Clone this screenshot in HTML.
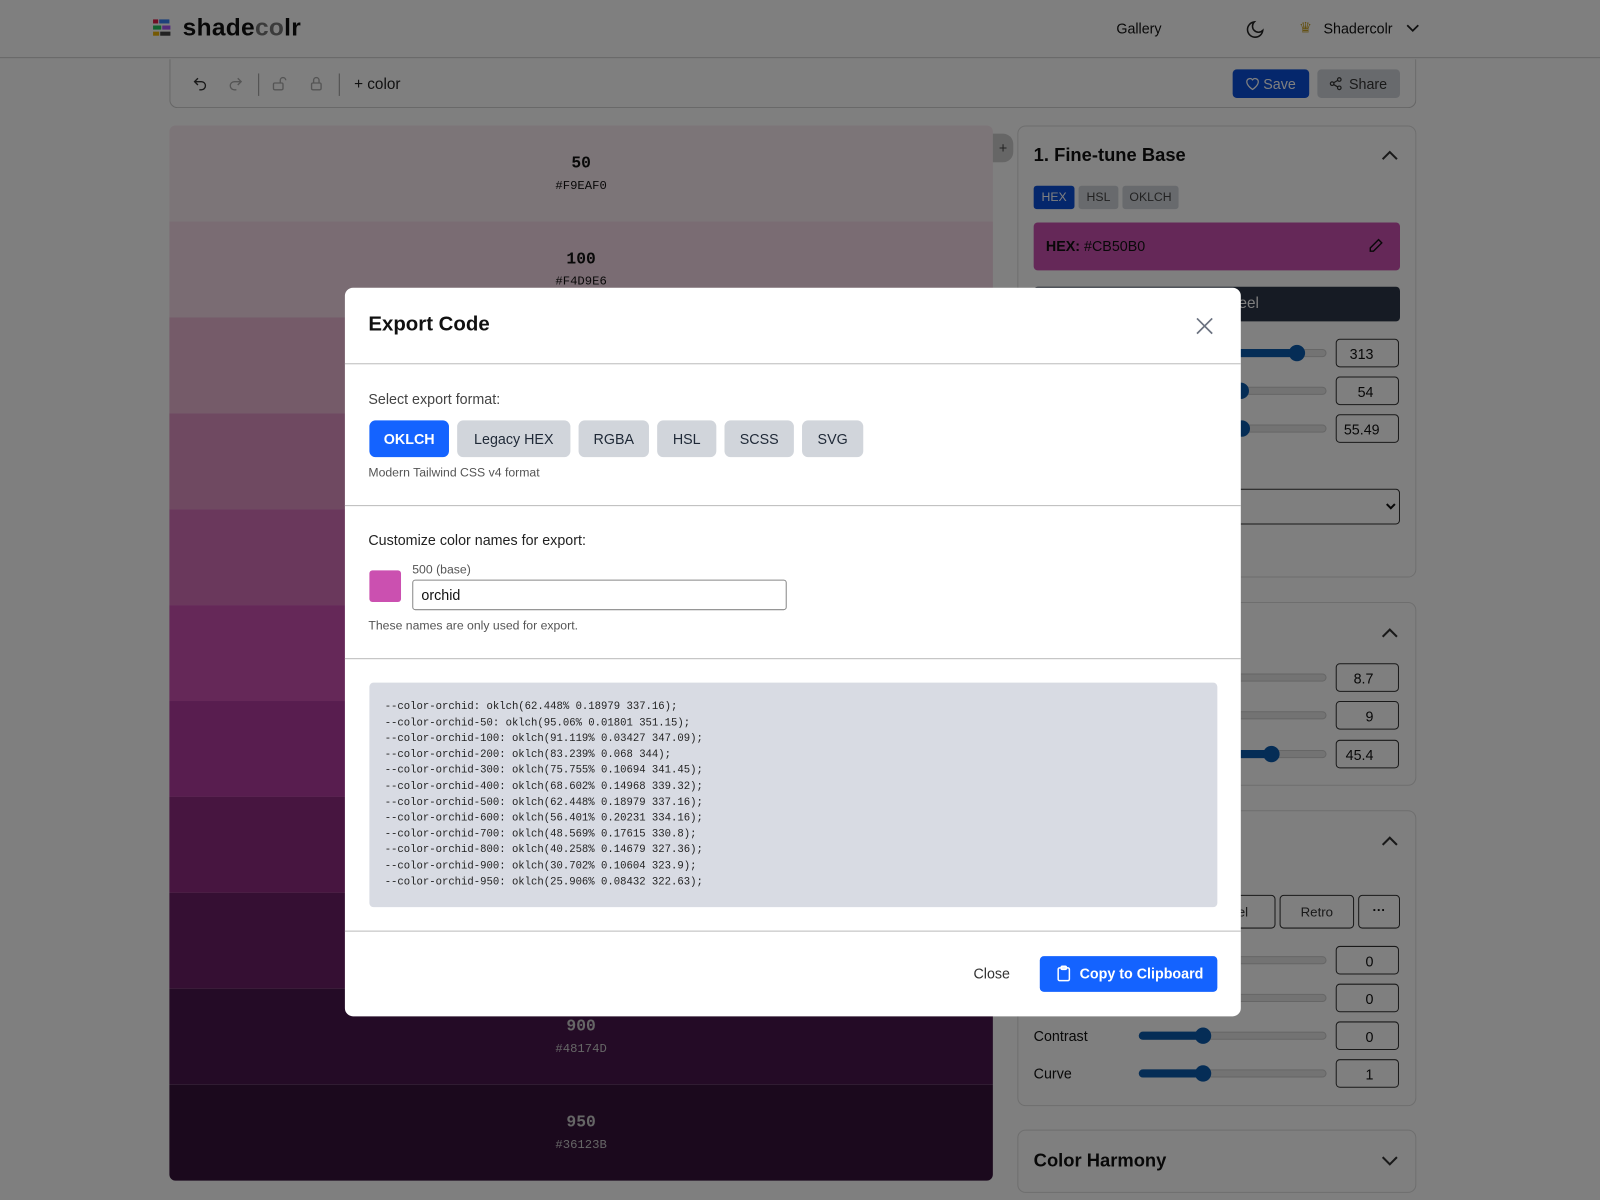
<!DOCTYPE html>
<html><head><meta charset="utf-8"><style>
*{box-sizing:border-box;margin:0;padding:0}
html,body{width:1600px;height:1200px;overflow:hidden;background:#fff;font-family:"Liberation Sans",sans-serif}
#w{position:absolute;left:0;top:0;width:1568px;height:1176px;transform:scale(1.020408);transform-origin:0 0;background:#fff}
.a{position:absolute}
.mono{font-family:"Liberation Mono",monospace}
.card{position:absolute;border:1px solid #ddd;border-radius:8px;background:#fff}
.sw{position:absolute;left:166px;width:807px;height:94px;text-align:center}
.sw b{display:block;margin-top:28px;font-family:"Liberation Mono",monospace;font-size:16px}
.sw span{display:block;margin-top:6px;font-family:"Liberation Mono",monospace;font-size:12px}
.num{position:absolute;width:62px;height:28px;border:1px solid #333;border-radius:4px;font-size:14px;text-align:right;padding:6px 24px 0 0;color:#111}
.num::after{content:"";position:absolute;right:5px;top:5px;width:8px;height:16px;background:
linear-gradient(#0000,#0000);border:none}
.track{position:absolute;height:8px;border-radius:4px;background:#e6e6e6;border:1px solid #ccc}
.fill{position:absolute;height:8px;border-radius:4px;background:#0a5aad}
.knob{position:absolute;width:16px;height:16px;border-radius:50%;background:#0a5aad}
.ov{position:absolute;left:0;top:0;width:1568px;height:1176px;background:rgba(0,0,0,.5)}
.fmt{position:absolute;top:412px;height:36px;border-radius:6px;background:#d1d5db;color:#1f2937;font-size:14px;text-align:center;line-height:36px}
.lbl{position:absolute;font-size:14px;color:#111}
.sp{position:absolute;right:4px;top:4px}
</style></head><body><div id="w">
<!-- header -->
<div class="a" style="left:0;top:0;width:1568px;height:57px;border-bottom:1px solid #ccc"></div>
<div class="a" style="left:150px;top:19px;width:17px;height:17px">
<div class="a" style="left:0;top:0;width:5px;height:4px;background:#e11d48"></div><div class="a" style="left:6px;top:0;width:10px;height:4px;background:#3b82f6"></div>
<div class="a" style="left:0;top:6px;width:8px;height:4px;background:#22c55e"></div><div class="a" style="left:9px;top:6px;width:8px;height:4px;background:#a855f7"></div>
<div class="a" style="left:0;top:12px;width:6px;height:4px;background:#eab308"></div><div class="a" style="left:7px;top:12px;width:10px;height:4px;background:#444"></div></div>
<div class="a" style="left:179px;top:14px;font-size:24px;font-weight:bold;color:#111;letter-spacing:.3px">shade<span style="color:#777">co</span>lr</div>
<div class="a" style="left:1094px;top:20px;font-size:14px;color:#111">Gallery</div>
<svg class="a" style="left:1220px;top:19px" width="20" height="20" viewBox="0 0 24 24" fill="none" stroke="#222" stroke-width="1.8"><path d="M21 13A9 9 0 1 1 11 3a7 7 0 0 0 10 10z"/></svg>
<div class="a" style="left:1273px;top:19px;font-size:14px;color:#c9a227">♛</div>
<div class="a" style="left:1297px;top:20px;font-size:14px;color:#111">Shadercolr</div>
<svg class="a" style="left:1378px;top:23px" width="13" height="10" viewBox="0 0 12 8" fill="none" stroke="#222" stroke-width="1.6"><path d="M1 1l5 5 5-5"/></svg>
<!-- toolbar -->
<div class="a" style="left:166px;top:58px;width:1222px;height:48px;border:1px solid #ccc;border-top:none;border-radius:0 0 8px 8px"></div>
<svg class="a" style="left:188px;top:74px" width="16" height="16" viewBox="0 0 24 24" fill="none" stroke="#333" stroke-width="2"><path d="M9 14L4 9l5-5"/><path d="M4 9h10a6 6 0 0 1 0 12h-3"/></svg>
<svg class="a" style="left:223px;top:74px" width="16" height="16" viewBox="0 0 24 24" fill="none" stroke="#aaa" stroke-width="2"><path d="M15 14l5-5-5-5"/><path d="M20 9H10a6 6 0 0 0 0 12h3"/></svg>
<div class="a" style="left:253px;top:72px;width:1px;height:22px;background:#999"></div>
<svg class="a" style="left:266px;top:73px" width="16" height="18" viewBox="0 0 24 24" fill="none" stroke="#aaa" stroke-width="2"><rect x="3" y="11" width="14" height="10" rx="2"/><path d="M13 11V7a4 4 0 0 1 8 0"/></svg>
<svg class="a" style="left:302px;top:73px" width="16" height="18" viewBox="0 0 24 24" fill="none" stroke="#aaa" stroke-width="2"><rect x="5" y="11" width="14" height="10" rx="2"/><path d="M8 11V7a4 4 0 0 1 8 0v4"/></svg>
<div class="a" style="left:332px;top:72px;width:1px;height:22px;background:#999"></div>
<div class="a" style="left:347px;top:74px;font-size:15px;color:#222">+ color</div>
<div class="a" style="left:1208px;top:68px;width:75px;height:28px;background:#0b4fd8;border-radius:4px;color:#fff;font-size:14px;line-height:28px;padding-left:30px">Save</div>
<svg class="a" style="left:1220px;top:75px" width="15" height="14" viewBox="0 0 24 22" fill="none" stroke="#fff" stroke-width="2"><path d="M12 20s-9-5.5-9-12a5 5 0 0 1 9-3 5 5 0 0 1 9 3c0 6.5-9 12-9 12z"/></svg>
<div class="a" style="left:1291px;top:68px;width:81px;height:28px;background:#d1d5db;border-radius:4px;color:#333;font-size:14px;line-height:28px;padding-left:31px">Share</div>
<svg class="a" style="left:1302px;top:75px" width="14" height="14" viewBox="0 0 24 24" fill="none" stroke="#333" stroke-width="2"><circle cx="18" cy="5" r="3"/><circle cx="6" cy="12" r="3"/><circle cx="18" cy="19" r="3"/><path d="M8.6 13.5l6.8 4M15.4 6.5l-6.8 4"/></svg>
<!-- swatches -->
<div class="sw" style="top:123px;background:#F9EAF0;color:#111;border-radius:6px 6px 0 0"><b>50</b><span>#F9EAF0</span></div>
<div class="sw" style="top:217px;background:#F4D9E6;color:#111"><b>100</b><span>#F4D9E6</span></div>
<div class="sw" style="top:311px;background:#EAB7D3;color:#111"><b>200</b><span>#EAB7D3</span></div>
<div class="sw" style="top:405px;background:#DF92C2;color:#111"><b>300</b><span>#DF92C2</span></div>
<div class="sw" style="top:499px;background:#D570B8;color:#111"><b>400</b><span>#D570B8</span></div>
<div class="sw" style="top:593px;background:#CB50B0;color:#111"><b>500</b><span>#CB50B0</span></div>
<div class="sw" style="top:687px;background:#B13A9E;color:#eee"><b>600</b><span>#B13A9E</span></div>
<div class="sw" style="top:781px;background:#8E2B80;color:#eee"><b>700</b><span>#8E2B80</span></div>
<div class="sw" style="top:875px;background:#6A1F66;color:#ddd"><b>800</b><span>#6A1F66</span></div>
<div class="sw" style="top:969px;background:#48174D;color:#ccc"><b>900</b><span>#48174D</span></div>
<div class="sw" style="top:1063px;background:#36123B;color:#ccc;border-radius:0 0 6px 6px"><b>950</b><span>#36123B</span></div>
<div class="a" style="left:973px;top:131px;width:20px;height:28px;background:#ccc;border-radius:0 10px 10px 0;text-align:center;font-size:14px;line-height:28px;color:#444">+</div>
<!-- right cards -->
<div class="card" style="left:997px;top:123px;width:391px;height:443px"></div>
<div class="a" style="left:1013px;top:142px;font-size:18px;font-weight:bold;color:#111">1. Fine-tune Base</div>
<svg class="a" style="left:1354px;top:147px" width="16" height="10" viewBox="0 0 16 10" fill="none" stroke="#333" stroke-width="2"><path d="M1 9l7-7 7 7"/></svg>
<div class="a" style="left:1013px;top:182px;width:40px;height:23px;background:#0b4fd8;border-radius:3px;color:#fff;font-size:12px;text-align:center;line-height:23px">HEX</div>
<div class="a" style="left:1057px;top:182px;width:39px;height:23px;background:#d1d5db;border-radius:3px;color:#444;font-size:12px;text-align:center;line-height:23px">HSL</div>
<div class="a" style="left:1100px;top:182px;width:55px;height:23px;background:#d1d5db;border-radius:3px;color:#444;font-size:12px;text-align:center;line-height:23px">OKLCH</div>
<div class="a" style="left:1013px;top:218px;width:359px;height:47px;background:#CB50B0;border-radius:4px;color:#111;font-size:14px;line-height:47px;padding-left:12px"><b>HEX:</b> #CB50B0</div>
<svg class="a" style="left:1341px;top:233px" width="15" height="15" viewBox="0 0 24 24" fill="none" stroke="#111" stroke-width="2.2"><path d="M16 3l5 5L8 21H3v-5z"/></svg>
<div class="a" style="left:1013px;top:281px;width:359px;height:34px;background:#2d3748;border-radius:4px;color:#fff;font-size:15px;line-height:34px;text-align:center">Color Wheel</div>
<div class="track" style="left:1120px;top:342px;width:180px"></div><div class="fill" style="left:1120px;top:342px;width:150px"></div><div class="knob" style="left:1263px;top:338px"></div><div class="num" style="left:1309px;top:332px">313</div>
<div class="track" style="left:1120px;top:379px;width:180px"></div><div class="fill" style="left:1120px;top:379px;width:90px"></div><div class="knob" style="left:1208px;top:375px"></div><div class="num" style="left:1309px;top:369px">54</div>
<div class="track" style="left:1120px;top:416px;width:180px"></div><div class="fill" style="left:1120px;top:416px;width:92px"></div><div class="knob" style="left:1209px;top:412px"></div><div class="num" style="left:1309px;top:406px;padding-right:18px">55.49</div>
<div class="a" style="left:1013px;top:479px;width:359px;height:35px;border:1px solid #333;border-radius:4px"></div>
<svg class="a" style="left:1358px;top:492px" width="10" height="8" viewBox="0 0 10 8" fill="none" stroke="#111" stroke-width="2"><path d="M1 2l4 4 4-4"/></svg>
<div class="card" style="left:997px;top:590px;width:391px;height:180px"></div>
<svg class="a" style="left:1354px;top:615px" width="16" height="10" viewBox="0 0 16 10" fill="none" stroke="#333" stroke-width="2"><path d="M1 9l7-7 7 7"/></svg>
<div class="track" style="left:1120px;top:660px;width:180px"></div><div class="num" style="left:1309px;top:650px">8.7</div>
<div class="track" style="left:1120px;top:697px;width:180px"></div><div class="num" style="left:1309px;top:687px">9</div>
<div class="track" style="left:1120px;top:735px;width:180px"></div><div class="fill" style="left:1120px;top:735px;width:125px"></div><div class="knob" style="left:1238px;top:731px"></div><div class="num" style="left:1309px;top:725px">45.4</div>
<div class="card" style="left:997px;top:794px;width:391px;height:290px"></div>
<svg class="a" style="left:1354px;top:819px" width="16" height="10" viewBox="0 0 16 10" fill="none" stroke="#333" stroke-width="2"><path d="M1 9l7-7 7 7"/></svg>
<div class="a" style="left:1160px;top:877px;width:90px;height:33px;border:1px solid #333;border-radius:4px;font-size:13px;text-align:center;line-height:31px;color:#333">Pastel</div>
<div class="a" style="left:1254px;top:877px;width:73px;height:33px;border:1px solid #333;border-radius:4px;font-size:13px;text-align:center;line-height:31px;color:#333">Retro</div>
<div class="a" style="left:1331px;top:877px;width:41px;height:33px;border:1px solid #333;border-radius:4px;font-size:13px;text-align:center;line-height:28px;color:#111;font-weight:bold">···</div>
<div class="track" style="left:1120px;top:937px;width:180px"></div><div class="num" style="left:1309px;top:927px">0</div>
<div class="track" style="left:1120px;top:974px;width:180px"></div><div class="num" style="left:1309px;top:964px">0</div>
<div class="lbl" style="left:1013px;top:1007px">Contrast</div><div class="track" style="left:1116px;top:1011px;width:184px"></div><div class="fill" style="left:1116px;top:1011px;width:62px"></div><div class="knob" style="left:1171px;top:1007px"></div><div class="num" style="left:1309px;top:1001px">0</div>
<div class="lbl" style="left:1013px;top:1044px">Curve</div><div class="track" style="left:1116px;top:1048px;width:184px"></div><div class="fill" style="left:1116px;top:1048px;width:62px"></div><div class="knob" style="left:1171px;top:1044px"></div><div class="num" style="left:1309px;top:1038px">1</div>
<div class="card" style="left:997px;top:1107px;width:391px;height:62px"></div>
<div class="a" style="left:1013px;top:1127px;font-size:18px;font-weight:bold;color:#111">Color Harmony</div>
<svg class="a" style="left:1354px;top:1133px" width="16" height="10" viewBox="0 0 16 10" fill="none" stroke="#333" stroke-width="2"><path d="M1 1l7 7 7-7"/></svg>
<!-- overlay -->
<div class="ov"></div>
<!-- modal -->
<div class="a" style="left:338px;top:282px;width:878px;height:714px;background:#fff;border-radius:8px"></div>
<div class="a" style="left:361px;top:307px;font-size:20px;font-weight:bold;color:#111">Export Code</div>
<svg class="a" style="left:1172px;top:311px" width="17" height="17" viewBox="0 0 16 16" fill="none" stroke="#6b7280" stroke-width="1.6"><path d="M1 1l14 14M15 1L1 15"/></svg>
<div class="a" style="left:338px;top:356px;width:878px;height:1px;background:#bbb"></div>
<div class="a" style="left:361px;top:383px;font-size:14px;color:#444">Select export format:</div>
<div class="fmt" style="left:362px;width:78px;background:#1463ff;color:#fff;font-weight:bold">OKLCH</div>
<div class="fmt" style="left:448px;width:111px">Legacy HEX</div>
<div class="fmt" style="left:567px;width:69px">RGBA</div>
<div class="fmt" style="left:644px;width:58px">HSL</div>
<div class="fmt" style="left:710px;width:68px">SCSS</div>
<div class="fmt" style="left:786px;width:60px">SVG</div>
<div class="a" style="left:361px;top:456px;font-size:12px;color:#555">Modern Tailwind CSS v4 format</div>
<div class="a" style="left:338px;top:495px;width:878px;height:1px;background:#bbb"></div>
<div class="a" style="left:361px;top:521px;font-size:14px;color:#222">Customize color names for export:</div>
<div class="a" style="left:362px;top:559px;width:31px;height:31px;background:#CB50B0;border-radius:3px"></div>
<div class="a" style="left:404px;top:551px;font-size:12px;color:#555">500 (base)</div>
<div class="a" style="left:404px;top:568px;width:367px;height:30px;border:1px solid #888;border-radius:3px;font-size:14px;padding:6px 8px;color:#111">orchid</div>
<div class="a" style="left:361px;top:606px;font-size:12px;color:#555">These names are only used for export.</div>
<div class="a" style="left:338px;top:645px;width:878px;height:1px;background:#bbb"></div>
<div class="a mono" style="left:362px;top:669px;width:831px;height:220px;background:#d8dbe3;border-radius:4px;padding:17px 15px;font-size:10.4px;line-height:15.6px;color:#222;white-space:pre">--color-orchid: oklch(62.448% 0.18979 337.16);
--color-orchid-50: oklch(95.06% 0.01801 351.15);
--color-orchid-100: oklch(91.119% 0.03427 347.09);
--color-orchid-200: oklch(83.239% 0.068 344);
--color-orchid-300: oklch(75.755% 0.10694 341.45);
--color-orchid-400: oklch(68.602% 0.14968 339.32);
--color-orchid-500: oklch(62.448% 0.18979 337.16);
--color-orchid-600: oklch(56.401% 0.20231 334.16);
--color-orchid-700: oklch(48.569% 0.17615 330.8);
--color-orchid-800: oklch(40.258% 0.14679 327.36);
--color-orchid-900: oklch(30.702% 0.10604 323.9);
--color-orchid-950: oklch(25.906% 0.08432 322.63);</div>
<div class="a" style="left:338px;top:912px;width:878px;height:1px;background:#bbb"></div>
<div class="a" style="left:954px;top:946px;font-size:14px;color:#333">Close</div>
<div class="a" style="left:1019px;top:937px;width:174px;height:35px;background:#1463ff;border-radius:4px;color:#fff;font-size:14px;font-weight:bold;line-height:35px;padding-left:39px">Copy to Clipboard</div>
<svg class="a" style="left:1036px;top:946px" width="13" height="16" viewBox="0 0 13 16" fill="none" stroke="#fff" stroke-width="1.5"><rect x="1" y="2.5" width="11" height="12.5" rx="1.5"/><rect x="4" y="1" width="5" height="3" rx="1"/></svg>
</div></body></html>
